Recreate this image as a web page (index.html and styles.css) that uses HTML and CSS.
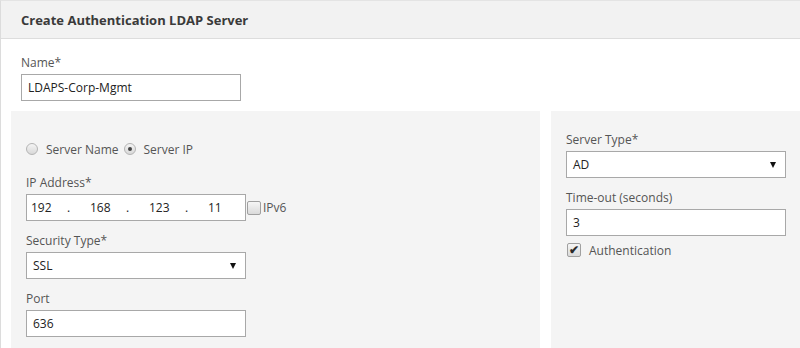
FILE: index.html
```html
<!DOCTYPE html>
<html lang="en">
<head>
<meta charset="UTF-8">
<title>Create Authentication LDAP Server</title>
<link rel="stylesheet" href="styles.css">
</head>
<body>

<div class="dialog">
    <div class="dialog-header">
        <h2>Create Authentication LDAP Server</h2>
    </div>

    <div class="dialog-body">
        <div class="name-field">
            <label class="field-label">Name*</label>
            <div class="text-input">LDAPS-Corp-Mgmt</div>
        </div>

        <div class="columns">
            <!-- left column -->
            <div class="panel panel-left">
                <div class="radio-row">
                    <span class="radio"></span><span class="radio-text">Server Name</span>
                    <span class="radio checked"></span><span class="radio-text">Server IP</span>
                </div>

                <div class="field">
                    <label class="field-label">IP Address*</label>
                    <div class="ip-row">
                        <div class="text-input ip-input">
                            <span class="octet">192</span><span class="dot">.</span>
                            <span class="octet">168</span><span class="dot">.</span>
                            <span class="octet">123</span><span class="dot">.</span>
                            <span class="octet">11</span>
                        </div>
                        <span class="checkbox"></span><span class="check-text">IPv6</span>
                    </div>
                </div>

                <div class="field">
                    <label class="field-label">Security Type*</label>
                    <div class="select">SSL</div>
                </div>

                <div class="field">
                    <label class="field-label">Port</label>
                    <div class="text-input">636</div>
                </div>
            </div>

            <!-- right column -->
            <div class="panel panel-right">
                <div class="field">
                    <label class="field-label">Server Type*</label>
                    <div class="select">AD</div>
                </div>

                <div class="field">
                    <label class="field-label">Time-out (seconds)</label>
                    <div class="text-input">3</div>
                </div>

                <div class="check-row">
                    <span class="checkbox checked">&#10004;</span><span class="check-text">Authentication</span>
                </div>
            </div>
        </div>
    </div>
</div>

</body>
</html>
```

FILE: styles.css
```css
/* page */
body {
    margin: 0;
    font-family: "Open Sans", "Noto Sans", sans-serif;
    font-size: 12px;
    color: #333;
    background-color: white;
    overflow: hidden;
}

.dialog {
    border-left: 1px solid #dcdcdc;
    border-top: 1px solid #e4e4e4;
    height: 347px;
}

.dialog-header {
    background-color: #f2f2f2;
    height: 37px;
    border-bottom: 1px solid #dddddd;
    display: flex;
    align-items: center;
    padding-left: 20px;
}

.dialog-header h2 {
    margin: 0;
    font-size: 13px;
    font-weight: bold;
    color: #3a3a3a;
}

.dialog-body {
    padding: 15px 0 0 10px;
}

.name-field {
    padding-left: 10px;
}

.field-label {
    display: block;
    line-height: 18px;
    margin-bottom: 2px;
    color: #555;
}

.text-input, .select {
    box-sizing: border-box;
    width: 220px;
    height: 27px;
    border: 1px solid #a8a8a8;
    background-color: white;
    padding: 0 6px;
    line-height: 25px;
    color: #222;
}

.columns {
    display: flex;
    gap: 11px;
    margin-top: 10px;
}

.panel {
    background-color: #f4f4f4;
    padding-left: 15px;
    height: 237px;
    box-sizing: border-box;
}

.panel-left {
    width: 529px;
    padding-top: 29px;
}

.panel-right {
    flex: 1;
    padding-top: 20px;
}

.field {
    margin-bottom: 11px;
}

/* radios */
.radio-row {
    display: flex;
    align-items: center;
    height: 18px;
    margin-bottom: 16px;
    color: #555;
}

.radio {
    box-sizing: border-box;
    width: 12px;
    height: 12px;
    border-radius: 50%;
    border: 1px solid #b4b4b4;
    background: linear-gradient(#f4f4f4, #d8d8d8);
    margin-right: 8px;
    position: relative;
}

.radio.checked::after {
    content: "";
    position: absolute;
    left: 3px;
    top: 3px;
    width: 4px;
    height: 4px;
    border-radius: 50%;
    background-color: #444;
}

.radio-text {
    margin-right: 5px;
}

/* ip address */
.ip-row {
    display: flex;
    align-items: center;
}

.ip-input {
    display: flex;
    padding: 0 0 0 4px;
    margin-right: 1px;
}

.octet {
    width: 36px;
}

.dot {
    width: 23px;
}

/* select */
.select {
    position: relative;
}

.select::after {
    content: "";
    position: absolute;
    right: 9px;
    top: 10px;
    border-left: 3.5px solid transparent;
    border-right: 3.5px solid transparent;
    border-top: 6px solid #111;
}

/* checkboxes */
.checkbox {
    box-sizing: border-box;
    width: 14px;
    height: 14px;
    border: 1px solid #a0a0a0;
    border-radius: 2px;
    background: linear-gradient(#f6f6f6, #dadada);
    margin-right: 2px;
    font-size: 12px;
    font-weight: bold;
    line-height: 12px;
    text-align: center;
    color: #2a2a2a;
}

.check-text {
    color: #555;
}

.check-row {
    display: flex;
    align-items: center;
    height: 18px;
    margin-top: -6px;
    padding-left: 1px;
}

.check-row .checkbox {
    margin-right: 8px;
}
```
